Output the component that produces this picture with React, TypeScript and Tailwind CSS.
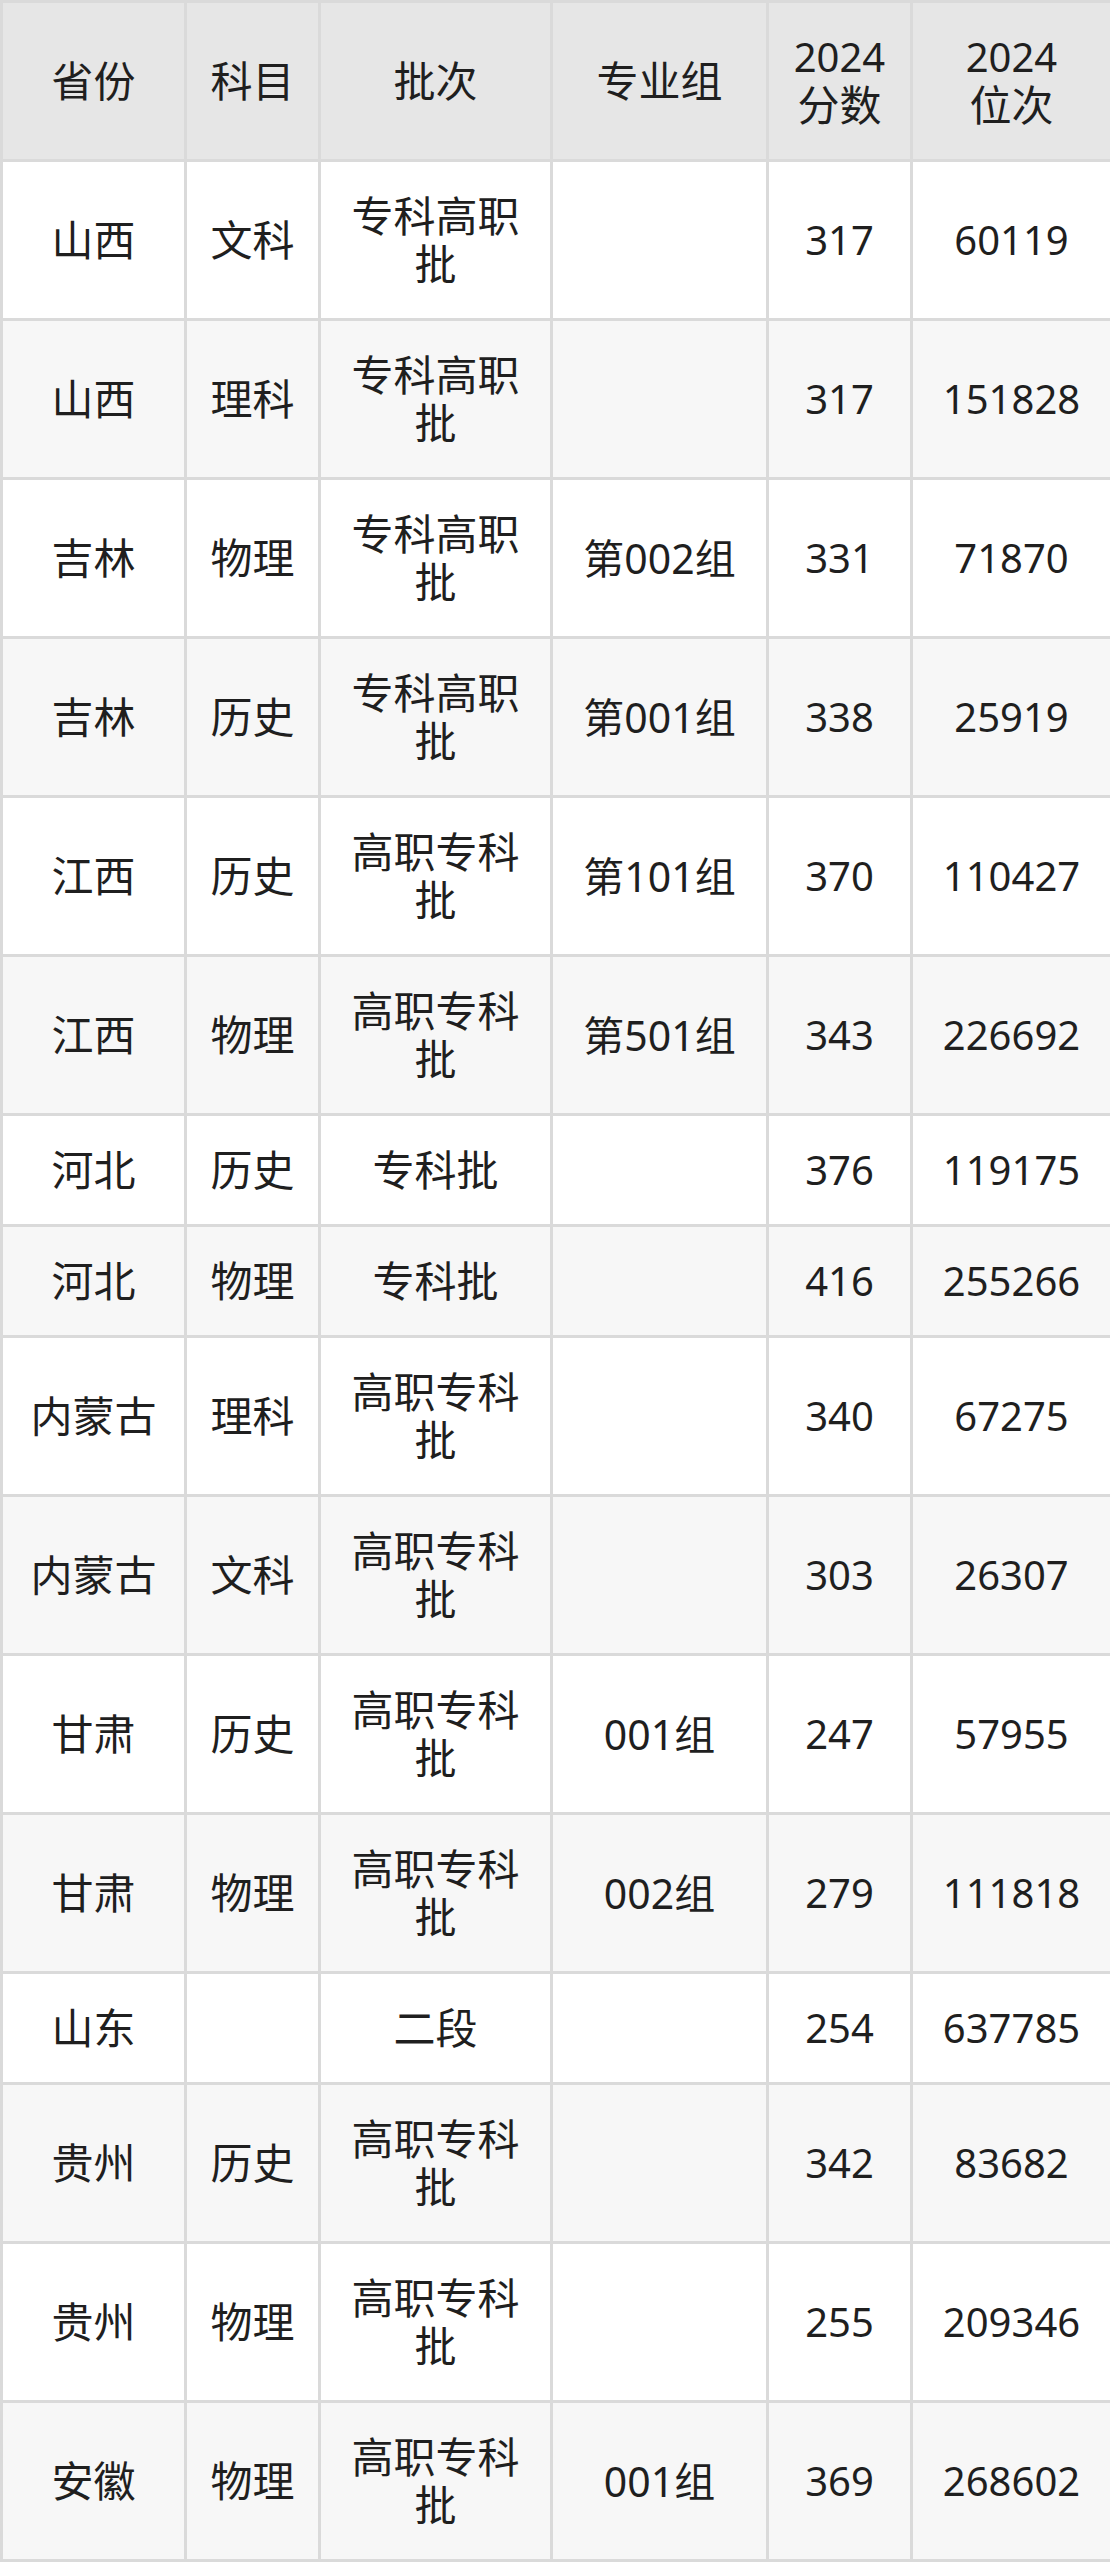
import React from "react";

type Row = [string, string, string[], string, string, string];

const rows: Row[] = [
  ["山西", "文科", ["专科高职", "批"], "", "317", "60119"],
  ["山西", "理科", ["专科高职", "批"], "", "317", "151828"],
  ["吉林", "物理", ["专科高职", "批"], "第002组", "331", "71870"],
  ["吉林", "历史", ["专科高职", "批"], "第001组", "338", "25919"],
  ["江西", "历史", ["高职专科", "批"], "第101组", "370", "110427"],
  ["江西", "物理", ["高职专科", "批"], "第501组", "343", "226692"],
  ["河北", "历史", ["专科批"], "", "376", "119175"],
  ["河北", "物理", ["专科批"], "", "416", "255266"],
  ["内蒙古", "理科", ["高职专科", "批"], "", "340", "67275"],
  ["内蒙古", "文科", ["高职专科", "批"], "", "303", "26307"],
  ["甘肃", "历史", ["高职专科", "批"], "001组", "247", "57955"],
  ["甘肃", "物理", ["高职专科", "批"], "002组", "279", "111818"],
  ["山东", "", ["二段"], "", "254", "637785"],
  ["贵州", "历史", ["高职专科", "批"], "", "342", "83682"],
  ["贵州", "物理", ["高职专科", "批"], "", "255", "209346"],
  ["安徽", "物理", ["高职专科", "批"], "001组", "369", "268602"],
];

const base =
  "border-[3px] border-[#dadada] px-2 py-[30px] text-center align-middle font-normal leading-[48px]";
const cjk = base + " text-[42px]";
const mixed = base + " text-[41px]";
const num = base + " text-[40px]";

export default function App() {
  return (
    <div
      className="w-[1110px] bg-white text-[#1f1f1f] text-[40px] leading-[48px]"
      style={{ fontFamily: '"Noto Sans", "Noto Sans CJK SC", sans-serif' }}
    >
      <table className="w-[1110px] table-fixed border-collapse">
        <colgroup>
          <col className="w-[184px]" />
          <col className="w-[134px]" />
          <col className="w-[232px]" />
          <col className="w-[216px]" />
          <col className="w-[144px]" />
          <col className="w-[200px]" />
        </colgroup>
        <thead>
          <tr className="bg-[#e6e6e6]">
            <th className={cjk}>省份</th>
            <th className={cjk}>科目</th>
            <th className={cjk}>批次</th>
            <th className={cjk}>专业组</th>
            <th className={num}>
              <div>2024</div>
              <div className="text-[42px]">分数</div>
            </th>
            <th className={num}>
              <div>2024</div>
              <div className="text-[42px]">位次</div>
            </th>
          </tr>
        </thead>
        <tbody>
          {rows.map((r, i) => (
            <tr key={i} className={i % 2 === 0 ? "bg-white" : "bg-[#f7f7f7]"}>
              <td className={cjk}>{r[0]}</td>
              <td className={cjk}>{r[1]}</td>
              <td className={cjk}>
                {r[2].map((l, j) => (
                  <div key={j}>{l}</div>
                ))}
              </td>
              <td className={mixed}>{r[3]}</td>
              <td className={num}>{r[4]}</td>
              <td className={num}>{r[5]}</td>
            </tr>
          ))}
        </tbody>
      </table>
    </div>
  );
}
